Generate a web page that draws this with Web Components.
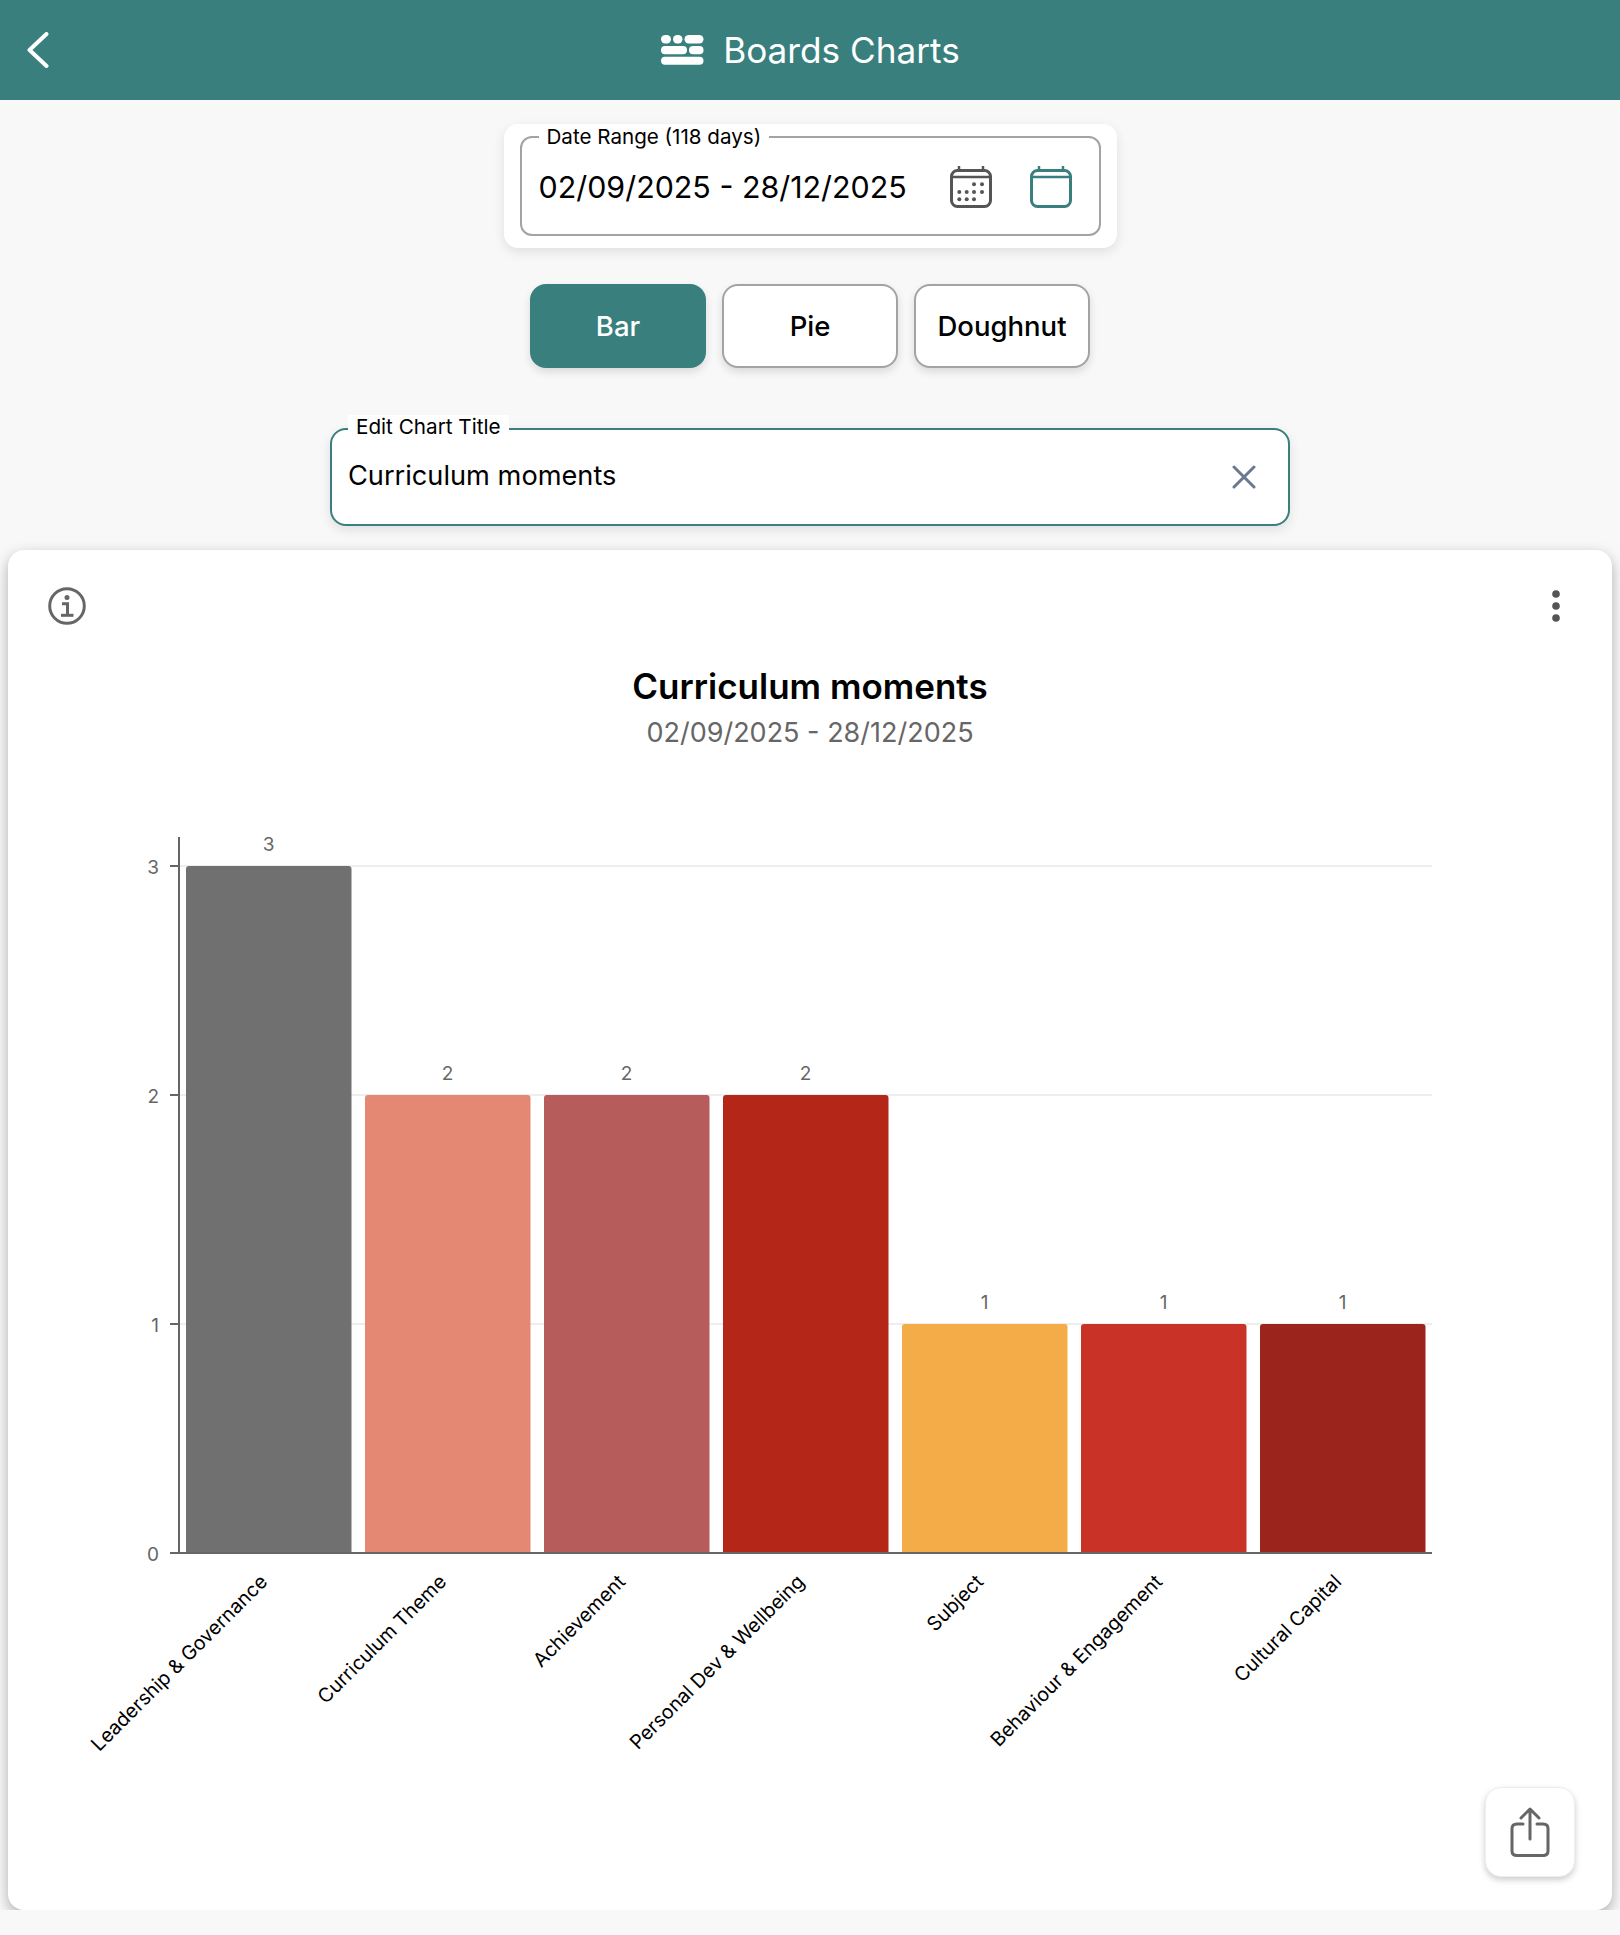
<!DOCTYPE html>
<html><head><meta charset="utf-8"><title>Boards Charts</title>
<style>
html,body{margin:0;padding:0;background:#f8f8f8;font-family:Inter,"Noto Sans",sans-serif;color:#000}
main{display:flex;flex-direction:column;align-items:center}
</style></head>
<body>
<app-header>Boards Charts</app-header>
<main>
<date-range label="Date Range (118 days)">02/09/2025 - 28/12/2025</date-range>
<chart-toggle></chart-toggle>
<title-field label="Edit Chart Title">Curriculum moments</title-field>
<chart-card heading="Curriculum moments" sub="02/09/2025 - 28/12/2025"></chart-card>
</main>
<script>
function def(name,html,init){customElements.define(name,class extends HTMLElement{constructor(){super();this.attachShadow({mode:'open'}).innerHTML=typeof html==='function'?html(this):html}connectedCallback(){init&&init(this)}})}

def('app-header',`<style>
:host{display:flex;align-items:center;justify-content:center;height:100px;background:#387f7e;color:#fff;position:relative;font:400 35.200px/1 Inter,sans-serif}
.back{position:absolute;left:27px;top:32px;width:22px;height:36px}
.t{display:flex;align-items:center;gap:19px;margin-left:1px}
span{position:relative;top:1px}
</style>
<svg class="back" viewBox="0 0 22 36" fill="none" stroke="#fff" stroke-width="4" stroke-linecap="round" stroke-linejoin="round"><path d="M19.500 2 2.500 18l17 16"/></svg>
<div class="t"><svg width="43" height="30" viewBox="0 0 43 30" fill="#fff"><rect x="0" y="0" width="10" height="8.500" rx="4.200"/><rect x="12" y="0" width="9.500" height="8.500" rx="4.200"/><rect x="23.500" y="0" width="19" height="8.500" rx="4.200"/><rect x="0" y="11" width="26" height="8.300" rx="4.100"/><rect x="28" y="11" width="14.500" height="8.300" rx="4.100"/><rect x="0" y="21.700" width="42.500" height="8" rx="4"/></svg><span><slot></slot></span></div>`);

const cal=(c,dots)=>`<svg width="42" height="42" viewBox="0 0 42 42" fill="none" stroke="${c}"><rect x="1.500" y="4.500" width="39" height="36" rx="6" stroke-width="3"/><path d="M9 0.500v4M33 0.500v4" stroke-width="2.500" stroke-linecap="round"/><path d="M2 11h38" stroke-width="2.500"/>${dots?[[24,18.300],[32,18.300],[9.300,26],[16.700,26],[24,26],[32,26],[9.300,33.300],[16.700,33.300],[24,33.300]].map(p=>`<circle cx="${p[0]}" cy="${p[1]}" r="2" fill="${c}" stroke="none"/>`).join(''):''}</svg>`;

def('date-range',el=>`<style>
:host{display:block;box-sizing:border-box;width:613px;margin-top:24px;padding:12px 16px 12px 16px;background:#fff;border-radius:14px;box-shadow:0 4px 12px rgba(0,0,0,.1)}
.f{position:relative;box-sizing:border-box;height:100px;border:2px solid #a3a3a3;border-radius:12px;display:flex;align-items:center;padding:2px 27px 0 17px}
label{position:absolute;left:17px;top:-13px;padding:0 8px;background:#fff;font:400 20.600px/24px Inter,sans-serif}
.v{flex:1;font:400 30.400px/40px Inter,sans-serif;white-space:nowrap}
.i{display:flex;gap:38px}
</style><div class="f"><label>${el.getAttribute('label')}</label><div class="v"><slot></slot></div><div class="i">${cal('#555',1)}${cal('#387f7e',0)}</div></div>`);

def('toggle-btn',`<style>
:host{display:flex;align-items:center;justify-content:center;box-sizing:border-box;width:176px;height:84px;padding-top:1px;border-radius:16px;background:#fff;border:2px solid #a3a3a3;box-shadow:0 4px 8px rgba(0,0,0,.12);font:500 27.500px/1 Inter,sans-serif;color:#000}
:host([active]){background:#387f7e;border-color:#387f7e;color:#fff}
</style><slot></slot>`);

def('chart-toggle',`<style>:host{display:flex;gap:16px;margin-top:36px}</style>
<toggle-btn active>Bar</toggle-btn><toggle-btn>Pie</toggle-btn><toggle-btn>Doughnut</toggle-btn>`);

def('title-field',el=>`<style>
:host{display:flex;align-items:center;position:relative;box-sizing:border-box;width:960px;height:98px;margin-top:60px;padding:0 32px 3px 16px;background:#fff;border:2px solid #387f7e;border-radius:16px;box-shadow:0 4px 12px rgba(0,0,0,.1)}
label{position:absolute;left:16px;top:-15px;padding:0 8px;background:#fff;font:400 20.700px/24px Inter,sans-serif}
.v{flex:1;font:400 27.200px/36px Inter,sans-serif}
svg{margin-top:3px}
</style><label>${el.getAttribute('label')}</label><div class="v"><slot></slot></div>
<svg width="24" height="24" viewBox="0 0 24 24" fill="none" stroke="#6a7890" stroke-width="3" stroke-linecap="round"><path d="M2 2l20 20M22 2 2 22"/></svg>`);

def('bar-chart',()=>{
 const d=[['Leadership & Governance',3,'#707070'],['Curriculum Theme',2,'#e48874'],['Achievement',2,'#b65d5c'],['Personal Dev & Wellbeing',2,'#b32618'],['Subject',1,'#f4ac48'],['Behaviour & Engagement',1,'#c93327'],['Cultural Capital',1,'#9b251c']];
 const x0=179,step=179,y0=1553,u=229;
 let s='';
 for(const v of [1,2,3])s+=`<line x1="${x0}" x2="1432" y1="${y0-u*v}" y2="${y0-u*v}" stroke="#eee" stroke-width="2"/>`;
 d.forEach((r,i)=>{const x=x0+step*i+7,h=u*r[1],cx=x+82.500;
  s+=`<path fill="${r[2]}" d="M${x} ${y0}V${y0-h+3}q0-3 3-3H${x+162.500}q3 0 3 3V${y0}z"/>`;
  s+=`<text class="val" x="${cx}" y="${y0-h-15}" text-anchor="middle">${r[1]}</text>`;
  s+=`<text class="cat" text-anchor="end" transform="translate(${cx} 1583) rotate(-45)">${r[0].replace('&','&amp;')}</text>`;
 });
 for(const v of [0,1,2,3]){s+=`<text class="val" x="159" y="${y0-u*v+8}" text-anchor="end">${v}</text><line x1="170" x2="179" y1="${y0-u*v}" y2="${y0-u*v}" stroke="#666" stroke-width="2"/>`}
 s+=`<line x1="179" x2="179" y1="837" y2="1553" stroke="#666" stroke-width="2"/><line x1="170" x2="1432" y1="1553" y2="1553" stroke="#666" stroke-width="2"/>`;
 return `<style>:host{display:block}svg{display:block}
 .val{font:400 19px Inter,sans-serif;fill:#666}.cat{font:400 19.600px Inter,sans-serif;fill:#000}</style>
 <svg width="1604" height="960" viewBox="8 820 1604 960">${s}</svg>`;
});

def('chart-card',el=>`<style>
:host{display:block;position:relative;box-sizing:border-box;width:1604px;height:1360px;margin-top:24px;background:#fff;border-radius:16px;box-shadow:0 5px 14px rgba(0,0,0,.3)}
.top{display:flex;justify-content:space-between;align-items:center;height:42px;padding:35px 51px 0 40px}
h2{margin:38px 0 0;text-align:center;font:600 35px/42px Inter,sans-serif}
p{margin:8px 0 0;text-align:center;font:400 27px/36px Inter,sans-serif;color:#666}
bar-chart{margin-top:69px}
.share{position:absolute;left:1477px;top:1237px;width:90px;height:90px;box-sizing:border-box;border-radius:16px;background:#fff;border:1px solid #eee;box-shadow:0 3px 6px rgba(0,0,0,.2);display:flex;align-items:center;justify-content:center}
</style>
<div class="top"><svg width="38" height="38" viewBox="0 0 38 38" fill="none" stroke="#666"><circle cx="19" cy="19" r="17.300" stroke-width="3"/><circle cx="19" cy="10.500" r="2.500" fill="#666" stroke="none"/><path d="M14 16.800h5.500V28" stroke-width="3"/><path d="M13 28.300h12.500" stroke-width="3"/></svg>
<svg width="10" height="34" viewBox="0 0 10 34" fill="#555"><circle cx="5" cy="5" r="3.800"/><circle cx="5" cy="17" r="3.800"/><circle cx="5" cy="29" r="3.800"/></svg></div>
<h2>${el.getAttribute('heading')}</h2><p>${el.getAttribute('sub')}</p>
<bar-chart></bar-chart>
<div class="share"><svg width="40" height="50" viewBox="0 0 40 50" fill="none" stroke="#666" stroke-width="3" stroke-linecap="round" stroke-linejoin="round"><path d="M20 32V2M11 11l9-9 9 9"/><path d="M13 17H7q-5 0-5 4.500V44q0 4.500 5 4.500H33q5 0 5-4.500V21.500q0-4.500-5-4.500H27"/></svg></div>`);
</script>
</body></html>
